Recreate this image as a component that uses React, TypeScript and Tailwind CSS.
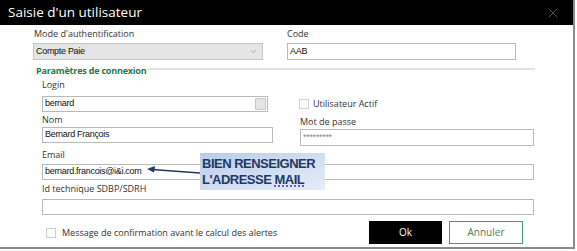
import { ChevronDown, X } from 'lucide-react'

// Fenêtre "Saisie d'un utilisateur" avec la bulle d'aide sur l'email
const label = "font-['Open_Sans',sans-serif] text-[9px] text-[#333] leading-[14px]"
const field =
  "h-[16px] border border-[#b9b9b9] bg-white px-[2px] flex items-center font-['Liberation_Sans',Arial,sans-serif] text-[9px] tracking-[-0.3px] text-[#111]"

function Check({ className = '' }: { className?: string }) {
  return <span className={`block w-[10px] h-[10px] border border-[#cfcfcf] bg-white ${className}`} />
}

export default function App() {
  return (
    <div className="w-[577px] h-[251px] bg-white relative overflow-hidden">
      <div className="w-[575px] h-[249px] border-r-2 border-b-2 border-[#8a8a8a] flex flex-col">
        {/* Barre de titre */}
        <div className="h-[25px] bg-black flex items-center justify-between pl-[8px] pr-[12px] shrink-0">
          <span className="font-['Open_Sans',sans-serif] text-[13.5px] text-white leading-none">Saisie d'un utilisateur</span>
          <X size={16} strokeWidth={1.3} className="text-[#4d6b6b]" />
        </div>

        {/* Mode / Code */}
        <div className="flex pl-[33px] pt-[2px]">
          <div className="w-[230px]">
            <div className={`${label} mb-[2px] pl-[1px]`}>Mode d'authentification</div>
            <div className="h-[17px] border border-[#c6c6c6] bg-[#e5e5e5] flex items-center justify-between pl-[2px] pr-[4px] font-['Liberation_Sans',Arial,sans-serif] text-[9px] tracking-[-0.3px] text-[#111]">
              Compte Paie
              <ChevronDown size={9} strokeWidth={1.5} className="text-[#777]" />
            </div>
          </div>
          <div className="w-[229px] ml-[24px]">
            <div className={`${label} mb-[2px]`}>Code</div>
            <div className={`${field} h-[17px]`}>AAB</div>
          </div>
        </div>

        {/* Paramètres de connexion */}
        <div className="flex items-center pl-[36px] mt-[3px] h-[14px] w-[535px]">
          <span className="font-['Open_Sans',sans-serif] font-bold text-[9px] text-[#217a4c] tracking-[-0.2px] leading-none">
            Paramètres de connexion
          </span>
          <span className="flex-1 h-[2px] bg-[#e2e2e2] ml-[2px] -mt-[2px]" />
        </div>

        {/* Login / actif */}
        <div className="pl-[42px] mt-[1px]">
          <div className={label}>Login</div>
        </div>
        <div className="flex items-center pl-[42px] mt-[4px]">
          <div className={`${field} w-[226px] h-[15px] justify-between pr-0`}>
            bernard
            <span className="w-[11px] h-[12px] bg-[#e3e3e3] border border-[#c9c9c9] mr-[1px]" />
          </div>
          <div className="flex items-center ml-[31px]">
            <Check />
            <span className={`${label} ml-[4px]`}>Utilisateur Actif</span>
          </div>
        </div>

        {/* Nom / mot de passe */}
        <div className="flex pl-[42px] mt-[1px] h-[30px]">
          <div className="w-[231px]">
            <div className={label}>Nom</div>
            <div className={field}>Bernard François</div>
          </div>
          <div className="w-[234px] ml-[27px] pt-[2px]">
            <div className={label}>Mot de passe</div>
            <div className={`${field} h-[17px] text-[#888] text-[7px]`}>*********</div>
          </div>
        </div>

        {/* Email */}
        <div className="pl-[42px] mt-[5px] w-[534px]">
          <div className={label}>Email</div>
          <div className={`${field} mt-[2px]`}>bernard.francois@i&amp;i.com</div>
        </div>

        {/* Id technique */}
        <div className="pl-[42px] mt-[2px] w-[534px]">
          <div className={label}>Id technique SDBP/SDRH</div>
          <div className={`${field} mt-[3px] h-[15px]`} />
        </div>

        {/* Bas de fenêtre */}
        <div className="flex items-center mt-[6px] pl-[46px] w-[523px]">
          <Check />
          <span className={`${label} ml-[6px]`}>Message de confirmation avant le calcul des alertes</span>
          <div className="ml-auto flex gap-[7px]">
            <button className="w-[73px] h-[23px] bg-black text-white font-['Open_Sans',sans-serif] text-[10px]">Ok</button>
            <button className="w-[74px] h-[23px] bg-white border border-[#3f9c70] text-[#4d7a5f] font-['Open_Sans',sans-serif] text-[10px]">
              Annuler
            </button>
          </div>
        </div>
      </div>

      {/* Flèche vers le champ email */}
      <svg className="absolute left-0 top-0" width="577" height="251">
        <line x1="152" y1="169.5" x2="200" y2="173" stroke="#1f3864" strokeWidth="1.3" />
        <polygon points="147,169 155,166 154,172.5" fill="#1f3864" />
      </svg>

      {/* Bulle d'aide */}
      <div className="absolute left-[200px] top-[153px] w-[125px] h-[37px] bg-gradient-to-br from-[#b9cdeb] to-[#e6edf8] flex flex-col justify-center pl-[2px]">
        <span className="font-['Liberation_Sans',Arial,sans-serif] font-bold text-[13px] leading-[16px] tracking-[-0.5px] text-[#1f3864]">
          BIEN RENSEIGNER
        </span>
        <span className="font-['Liberation_Sans',Arial,sans-serif] font-bold text-[13px] leading-[16px] tracking-[-0.5px] text-[#1f3864]">
          L'ADRESSE{' '}
          <span className="underline decoration-dotted decoration-[#6b5bd0] decoration-2 underline-offset-2">MAIL</span>
        </span>
      </div>
    </div>
  )
}
